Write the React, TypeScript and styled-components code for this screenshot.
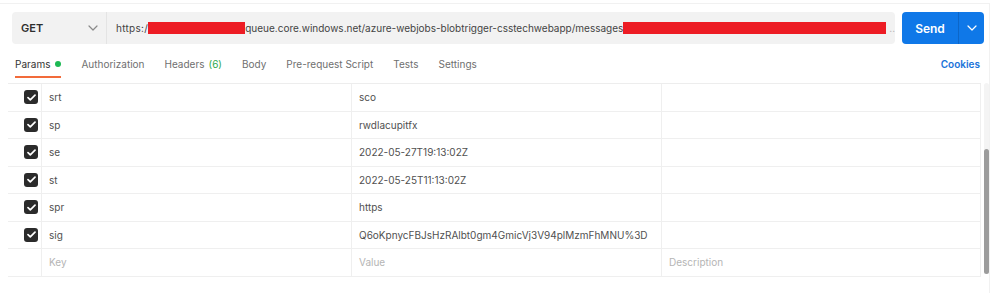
import React from "react";
import styled, { createGlobalStyle } from "styled-components";

const GlobalStyle = createGlobalStyle`
  body {
    margin: 0;
    background: #ffffff;
    font-family: Inter, "Noto Sans", sans-serif;
  }
`;

interface Param {
  key: string;
  value: string;
}

const params: Param[] = [
  { key: "srt", value: "sco" },
  { key: "sp", value: "rwdlacupitfx" },
  { key: "se", value: "2022-05-27T19:13:02Z" },
  { key: "st", value: "2022-05-25T11:13:02Z" },
  { key: "spr", value: "https" },
  { key: "sig", value: "Q6oKpnycFBJsHzRAlbt0gm4GmicVj3V94plMzmFhMNU%3D" },
];

const tabs = [
  { label: "Params", dot: true },
  { label: "Authorization" },
  { label: "Headers", count: "(6)" },
  { label: "Body" },
  { label: "Pre-request Script" },
  { label: "Tests" },
  { label: "Settings" },
];

const Chevron = ({ color }: { color: string }) => (
  <svg width="10" height="6" viewBox="0 0 10 6" fill="none">
    <path d="M1 1l4 4 4-4" stroke={color} strokeWidth="1.2" strokeLinecap="round" strokeLinejoin="round" />
  </svg>
);

const CheckIcon = () => (
  <svg width="9" height="7" viewBox="0 0 9 7" fill="none">
    <path d="M1 3.6l2.3 2.2L8 1.2" stroke="#fff" strokeWidth="1.7" strokeLinecap="round" strokeLinejoin="round" />
  </svg>
);

const App: React.FC = () => {
  return (
    <>
      <GlobalStyle />
      <Panel>
        <RequestBar>
          <MethodBox>
            <MethodText>GET</MethodText>
            <Chevron color="#8a8a8a" />
          </MethodBox>
          <UrlBox>
            <span>https:/</span>
            <Redacted $width={97} />
            <span>queue.core.windows.net/azure-webjobs-blobtrigger-csstechwebapp/messages</span>
            <Redacted $width={263} />
            <Ellipsis>..</Ellipsis>
          </UrlBox>
          <SendButton>
            <SendLabel>Send</SendLabel>
            <SendArrow>
              <Chevron color="#ffffff" />
            </SendArrow>
          </SendButton>
        </RequestBar>

        <TabBar>
          <Tabs>
            {tabs.map((t) => (
              <Tab key={t.label} $active={!!t.dot}>
                {t.label}
                {t.count && <Count>{t.count}</Count>}
                {t.dot && <Dot />}
              </Tab>
            ))}
          </Tabs>
          <Cookies>Cookies</Cookies>
        </TabBar>

        <TableArea>
          <Table>
            {params.map((p) => (
              <Row key={p.key}>
                <CheckCell>
                  <Checkbox>
                    <CheckIcon />
                  </Checkbox>
                </CheckCell>
                <Cell>{p.key}</Cell>
                <Cell>{p.value}</Cell>
                <Cell />
              </Row>
            ))}
            <Row>
              <CheckCell />
              <Cell $placeholder>Key</Cell>
              <Cell $placeholder>Value</Cell>
              <Cell $placeholder>Description</Cell>
            </Row>
          </Table>
          <ScrollTrack>
            <ScrollThumb />
          </ScrollTrack>
        </TableArea>
      </Panel>
    </>
  );
};

export default App;

const Panel = styled.div`
  margin-top: 3px;
  width: 990px;
  height: 290px;
  box-sizing: border-box;
  border-top: 1px solid #f1f1f1;
  border-right: 1px solid #f1f1f1;
  padding-top: 8px;
`;

const RequestBar = styled.div`
  display: flex;
  align-items: stretch;
  height: 32px;
  padding-left: 12px;
`;

const MethodBox = styled.div`
  width: 95px;
  box-sizing: border-box;
  display: flex;
  align-items: center;
  justify-content: space-between;
  padding: 0 8px 0 9px;
  background: #f2f2f2;
  border-radius: 4px 0 0 4px;
  border-right: 1px solid #e4e4e4;
`;

const MethodText = styled.span`
  font-size: 11px;
  font-weight: 600;
  color: #2e2e2e;
`;

const UrlBox = styled.div`
  width: 788px;
  box-sizing: border-box;
  display: flex;
  align-items: center;
  padding-left: 9px;
  background: #f2f2f2;
  border-radius: 0 4px 4px 0;
  font-size: 10px;
  color: #444;
  white-space: nowrap;
  overflow: hidden;

  > span:first-child {
    letter-spacing: 0.3px;
  }
`;

const Redacted = styled.span<{ $width: number }>`
  display: inline-block;
  width: ${({ $width }) => $width}px;
  height: 12px;
  background: #ed1c24;
  flex-shrink: 0;
`;

const Ellipsis = styled.span`
  color: #b0b0b0;
  margin-left: 3px;
`;

const SendButton = styled.div`
  margin-left: 7px;
  width: 82px;
  display: flex;
  background: #0f78e8;
  border-radius: 4px;
  color: #fff;
`;

const SendLabel = styled.div`
  width: 56px;
  display: flex;
  align-items: center;
  justify-content: center;
  font-size: 12px;
  font-weight: 600;
  border-right: 1px solid #0c66c8;
`;

const SendArrow = styled.div`
  flex: 1;
  display: flex;
  align-items: center;
  justify-content: center;
`;

const TabBar = styled.div`
  display: flex;
  justify-content: space-between;
  align-items: flex-start;
  height: 39px;
  padding: 8px 9px 0 15px;
  box-sizing: border-box;
`;

const Tabs = styled.div`
  display: flex;
  gap: 20px;
`;

const Tab = styled.div<{ $active: boolean }>`
  display: flex;
  align-items: center;
  height: 26px;
  font-size: 10px;
  color: ${({ $active }) => ($active ? "#333" : "#6f6f6f")};
  border-bottom: 2px solid ${({ $active }) => ($active ? "#f26b3a" : "transparent")};
  box-sizing: border-box;
`;

const Count = styled.span`
  color: #2fa84f;
  margin-left: 4px;
`;

const Dot = styled.span`
  width: 6px;
  height: 6px;
  border-radius: 50%;
  background: #1db954;
  margin-left: 5px;
`;

const Cookies = styled.div`
  font-size: 10px;
  font-weight: 600;
  line-height: 24px;
  color: #1a73d9;
`;

const TableArea = styled.div`
  display: flex;
  padding-left: 8px;
`;

const Table = styled.div`
  width: 973px;
  border-top: 1px solid #ededed;
`;

const Row = styled.div`
  display: grid;
  grid-template-columns: 34px 310px 310px 1fr;
  height: 27.5px;
  border-bottom: 1px solid #efefef;
  border-right: 1px solid #efefef;
  box-sizing: border-box;
`;

const CheckCell = styled.div`
  display: flex;
  align-items: center;
  padding-left: 16px;
  border-right: 1px solid #efefef;
`;

const Checkbox = styled.div`
  width: 14px;
  height: 14px;
  border-radius: 3px;
  background: #2b2b2b;
  display: flex;
  align-items: center;
  justify-content: center;
`;

const Cell = styled.div<{ $placeholder?: boolean }>`
  display: flex;
  align-items: center;
  padding-left: 7px;
  font-size: 10px;
  color: ${({ $placeholder }) => ($placeholder ? "#b5b5b5" : "#505050")};
  border-right: 1px solid #efefef;
  &:last-child {
    border-right: none;
  }
`;

const ScrollTrack = styled.div`
  margin-left: 3px;
  width: 5px;
  height: 191px;
  background: #f4f4f4;
  border-radius: 3px;
  display: flex;
  flex-direction: column;
  justify-content: flex-end;
`;

const ScrollThumb = styled.div`
  height: 125px;
  background: #9c9c9c;
  border-radius: 3px;
`;
